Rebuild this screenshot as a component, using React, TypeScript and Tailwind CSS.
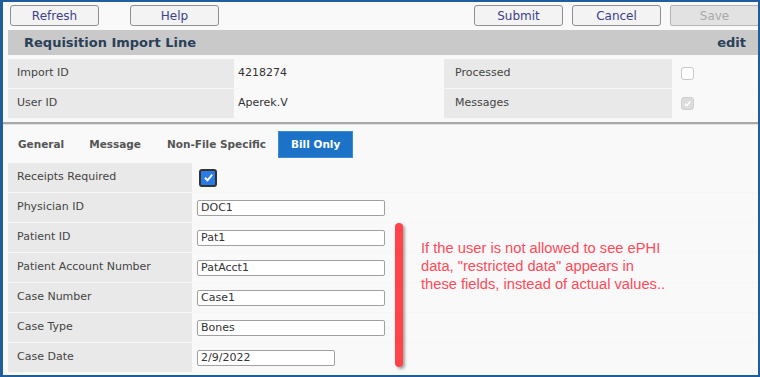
import React from 'react'

const ui = { fontFamily: '"DejaVu Sans", Verdana, sans-serif' }

function ToolButton({ label, disabled }: { label: string; disabled?: boolean }) {
    return (
        <button
            className={
                disabled
                    ? 'h-[21px] w-[89px] border border-[#b5b5b5] bg-[#e2e2e2] text-[12px] text-[#a9a9a9] rounded-[2px]'
                    : 'h-[21px] w-[89px] border border-[#8f8f8f] bg-[#f3f3f3] text-[12px] text-[#3d3f8c] rounded-[3px]'
            }
        >
            {label}
        </button>
    )
}

function Field({ label, value, narrow }: { label: string; value: string; narrow?: boolean }) {
    return (
        <div className="flex h-[30px] border-b border-[#f6f6f6]">
            <div className="w-[184px] bg-[#e9e9e9] pl-[9px] flex items-center text-[11px] text-[#444]">{label}</div>
            <div className="flex items-center pl-[5px]">
                <div
                    className={`${narrow ? 'w-[138px]' : 'w-[188px]'} h-[16px] border border-[#a0a0a0] rounded-[2px] bg-white px-[3px] text-[11px] text-[#333] leading-[14px]`}
                >
                    {value}
                </div>
            </div>
        </div>
    )
}

export default function App() {
    return (
        <div
            className="relative w-[760px] h-[377px] overflow-hidden bg-[#f9f9f9] border-l-[3px] border-t-[2px] border-r-[2px] border-b-[2px] border-[#1f5d9c]"
            style={ui}
        >
            {/* Toolbar */}
            <div className="flex items-center h-[26px] pt-[1px] pl-[7px] pr-0">
                <div className="flex gap-[31px]">
                    <ToolButton label="Refresh" />
                    <ToolButton label="Help" />
                </div>
                <div className="flex gap-[9px] ml-auto mr-[-1px]">
                    <ToolButton label="Submit" />
                    <ToolButton label="Cancel" />
                    <ToolButton label="Save" disabled />
                </div>
            </div>

            {/* Header */}
            <div className="ml-[5px] mt-[2px] h-[25px] bg-[#c9c9c9] flex items-center justify-between pl-[16px] pr-[12px]">
                <span className="text-[13px] font-bold text-[#2b3f58]">Requisition Import Line</span>
                <span className="text-[13px] font-bold text-[#2b3f58]">edit</span>
            </div>

            {/* Info */}
            <div className="mt-[4px] ml-[5px]">
                {[
                    ['Import ID', '4218274', 'Processed', false],
                    ['User ID', 'Aperek.V', 'Messages', true],
                ].map(([l, v, l2, chk]) => (
                    <div key={l as string} className="flex h-[30px] border-b border-[#f7f7f7]">
                        <div className="w-[226px] bg-[#e9e9e9] pl-[9px] flex items-center text-[11px] text-[#444]">{l}</div>
                        <div className="w-[210px] pl-[4px] flex items-center text-[11px] text-[#333]">{v}</div>
                        <div className="w-[228px] bg-[#e9e9e9] pl-[11px] flex items-center text-[11px] text-[#444]">{l2}</div>
                        <div className="pl-[9px] flex items-center">
                            <div
                                className={`w-[13px] h-[13px] rounded-[3px] border ${chk ? 'bg-[#dcdcdc] border-[#d0d0d0]' : 'bg-white border-[#c8c8c8]'} flex items-center justify-center`}
                            >
                                {chk && (
                                    <svg width="9" height="9" viewBox="0 0 10 10">
                                        <path d="M2 5.2 L4.2 7.4 L8.2 2.6" stroke="#fff" strokeWidth="1.6" fill="none" />
                                    </svg>
                                )}
                            </div>
                        </div>
                    </div>
                ))}
            </div>

            {/* Separator */}
            <div className="mt-[3px] border-t-2 border-[#a8a8a8] border-b border-b-[#e0e0e0]" />

            {/* Tabs */}
            <div className="flex items-center h-[27px] mt-[6px] pl-[15px] text-[10.5px] font-bold text-[#555]">
                <span className="mr-[25px]">General</span>
                <span className="mr-[26px]">Message</span>
                <span className="mr-[12px]">Non-File Specific</span>
                <span className="h-[27px] px-[12px] flex items-center bg-[#1b72c6] text-white border border-[#3d8ad6]">Bill Only</span>
            </div>

            {/* Form */}
            <div className="mt-[5px] ml-[5px]">
                <div className="flex h-[30px] border-b border-[#f6f6f6]">
                    <div className="w-[184px] bg-[#e9e9e9] pl-[9px] flex items-center text-[11px] text-[#444]">Receipts Required</div>
                    <div className="flex items-center pl-[7px]">
                        <div className="w-[18px] h-[18px] rounded-[3px] border-2 border-[#333] bg-[#2a7be4] flex items-center justify-center">
                            <svg width="11" height="11" viewBox="0 0 10 10">
                                <path d="M1.8 5.2 L4.1 7.5 L8.4 2.4" stroke="#fff" strokeWidth="1.7" fill="none" />
                            </svg>
                        </div>
                    </div>
                </div>
                <Field label="Physician ID" value="DOC1" />
                <Field label="Patient ID" value="Pat1" />
                <Field label="Patient Account Number" value="PatAcct1" />
                <Field label="Case Number" value="Case1" />
                <Field label="Case Type" value="Bones" />
                <Field label="Case Date" value="2/9/2022" narrow />
            </div>

            {/* Annotation */}
            <div className="absolute left-[392px] top-[221px] w-[8px] h-[144px] rounded-full bg-[#ff4346] shadow-[2px_2px_3px_rgba(0,0,0,0.35)]" />
            <div
                className="absolute left-[418px] top-[237px] text-[14.7px] leading-[18px] text-[#ff4a5a]"
                style={{ fontFamily: '"Liberation Sans", Arial, sans-serif' }}
            >
                If the user is not allowed to see ePHI
                <br />
                data, "restricted data" appears in
                <br />
                these fields, instead of actual values..
            </div>
        </div>
    )
}
